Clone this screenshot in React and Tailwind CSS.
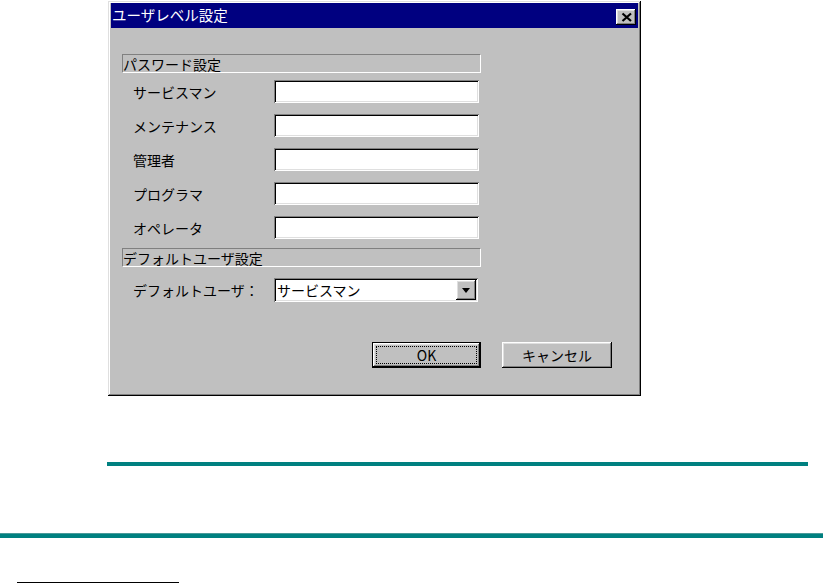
const windowBevel =
  "shadow-[inset_-1px_-1px_0_#000,inset_1px_1px_0_#dfdfdf,inset_-2px_-2px_0_#808080,inset_2px_2px_0_#fff]";
const raised =
  "shadow-[inset_-1px_-1px_0_#000,inset_1px_1px_0_#fff,inset_-2px_-2px_0_#808080,inset_2px_2px_0_#dfdfdf]";
const sunken =
  "shadow-[inset_1px_1px_0_#808080,inset_-1px_-1px_0_#fff,inset_2px_2px_0_#000,inset_-2px_-2px_0_#dfdfdf]";

const users = ["サービスマン", "メンテナンス", "管理者", "プログラマ", "オペレータ"];

function GroupHeader({ children }) {
  return (
    <div className="ml-[11px] w-[359px] h-[19px] border-t border-l border-t-[#808080] border-l-[#808080] border-b border-r border-b-white border-r-white flex items-center text-[14px] leading-none text-black">
      {children}
    </div>
  );
}

function Field({ label }) {
  return (
    <div className="flex items-center h-[23px] pl-[22px]">
      <span className="w-[141px] text-[14px] leading-none text-black">{label}</span>
      <div className={`w-[205px] h-[23px] bg-white ${sunken}`} />
    </div>
  );
}

export default function App() {
  return (
    <div className="w-[823px] h-[584px] bg-white overflow-hidden font-['Noto_Sans_CJK_JP',sans-serif]">
      {/* dialog */}
      <div className={`ml-[108px] mt-[1px] w-[533px] h-[395px] bg-[#c0c0c0] p-[2px] ${windowBevel}`}>
        <div className="h-[25px] mt-[0px] ml-[1px] mr-[1px] bg-[#000080] flex items-start justify-between pr-[2px]">
          <span className="pl-[1px] mt-[5px] text-[14.5px] leading-none text-white">ユーザレベル設定</span>
          <button className={`w-[20px] h-[16px] mt-[6px] bg-[#c0c0c0] ${raised} flex items-center justify-center`}>
            <svg width="20" height="16" viewBox="0 0 20 16">
              <path d="M6.5 4.5 L15 12 M15 4.5 L6.5 12" stroke="#000" strokeWidth="2.2" />
            </svg>
          </button>
        </div>

        <div className="mt-[26px] ml-[1px]">
          <GroupHeader>パスワード設定</GroupHeader>
          <div className="mt-[7px] flex flex-col gap-[11px]">
            {users.map((u) => (
              <Field key={u} label={u} />
            ))}
          </div>

          <div className="mt-[9px]">
            <GroupHeader>デフォルトユーザ設定</GroupHeader>
          </div>

          <div className="mt-[11px] flex items-center h-[24px] pl-[22px]">
            <span className="w-[141px] text-[14px] leading-none text-black">デフォルトユーザ：</span>
            <div className={`w-[204px] h-[24px] bg-white ${sunken} flex items-center justify-between pl-[3px] pr-[2px]`}>
              <span className="text-[14px] leading-none text-black">サービスマン</span>
              <div className={`w-[20px] h-[20px] bg-[#c0c0c0] ${raised} flex items-center justify-center`}>
                <svg width="8" height="5" viewBox="0 0 8 5">
                  <path d="M0 0 H8 L4 5 Z" fill="#000" />
                </svg>
              </div>
            </div>
          </div>

          <div className="mt-[40px] flex items-center pl-[261px] gap-[21px]">
            <button className="w-[109px] h-[26px] border border-black bg-[#c0c0c0] p-0">
              <div className={`w-full h-full ${raised} p-[3px]`}>
                <div className="w-full h-full border border-dotted border-[#000] flex items-center justify-center text-[14px] leading-none text-black">
                  OK
                </div>
              </div>
            </button>
            <button className={`w-[110px] h-[26px] bg-[#c0c0c0] ${raised} flex items-center justify-center text-[14px] leading-none text-black`}>
              キャンセル
            </button>
          </div>
        </div>
      </div>

      {/* rules below */}
      <div className="mt-[66px] ml-[107px] w-[701px] h-[4px] bg-[#008080]" />
      <div className="mt-[67px] w-full h-[5px] bg-[#008080] border-t border-t-[#4a9a9a]" />
      <div className="mt-[44px] ml-[17px] w-[162px] h-[1px] bg-black" />
    </div>
  );
}
